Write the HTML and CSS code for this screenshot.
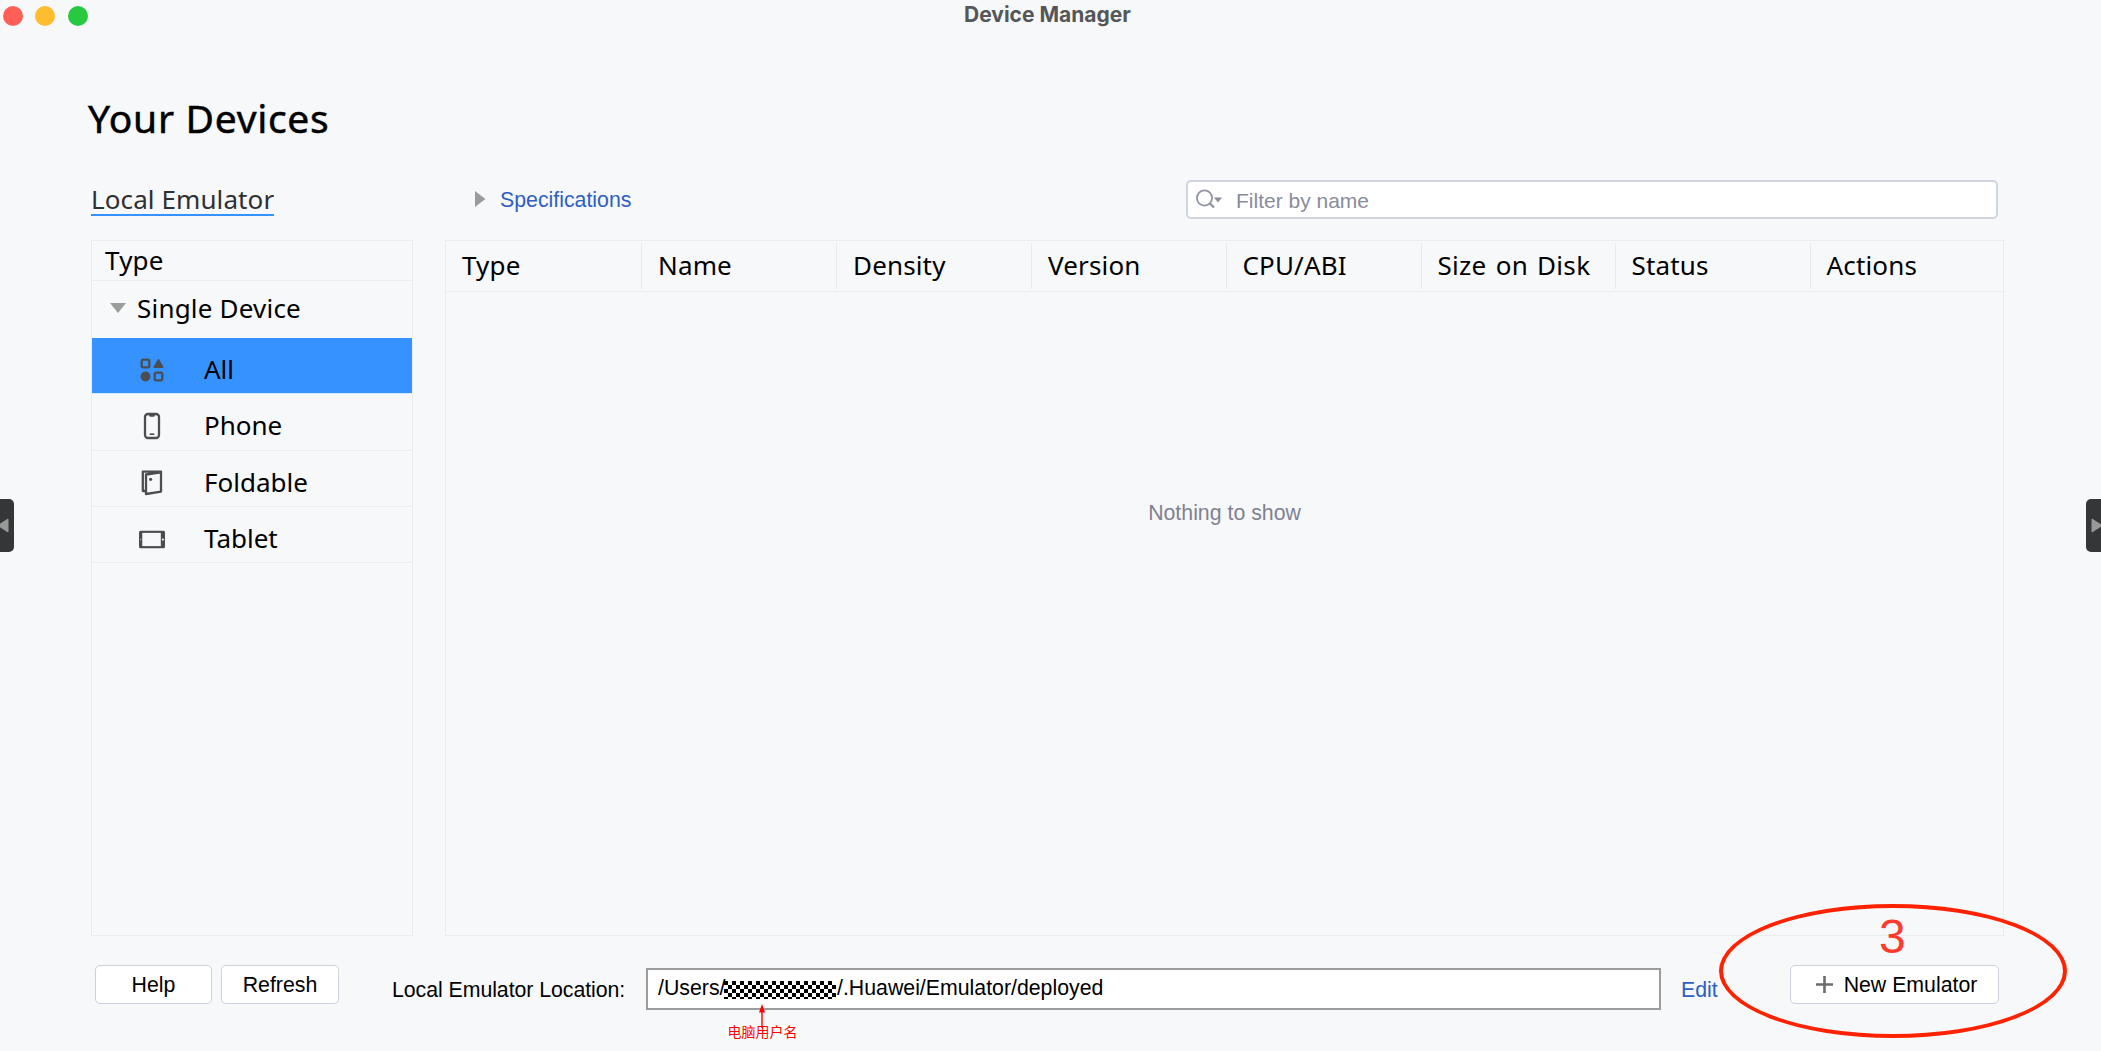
FILE: index.html
```html
<!DOCTYPE html>
<html lang="en">
<head>
    <meta charset="UTF-8">
    <meta name="viewport" content="width=device-width, initial-scale=1.0">
    <title>Device Manager</title>
    <link rel="stylesheet" href="styles.css">
</head>
<body>
    <header class="titlebar">
        <div class="lights">
            <span class="light red"></span>
            <span class="light yellow"></span>
            <span class="light green"></span>
        </div>
        <div class="window-title">Device Manager</div>
    </header>

    <main>
        <h1>Your Devices</h1>

        <div class="toolbar">
            <div class="tab-box"><a class="tab">Local Emulator</a></div>
            <div class="specs">
                <svg width="11" height="16" viewBox="0 0 11 16"><path d="M0 0L10.5 8L0 16z" fill="#9b9c9c"/></svg>
                <a class="link">Specifications</a>
            </div>
            <div class="search">
                <svg width="26" height="22" viewBox="0 0 26 22" fill="none">
                    <circle cx="8.5" cy="9" r="7.6" stroke="#9094a3" stroke-width="1.8"/>
                    <path d="M13.5 14L18 18.5" stroke="#9094a3" stroke-width="2.4"/>
                    <path d="M18 8.5h8l-4 5z" fill="#888c9b"/>
                </svg>
                <span>Filter by name</span>
            </div>
        </div>

        <div class="panels">
            <aside class="sidebar">
                <div class="side-head">Type</div>
                <div class="group">
                    <svg width="16" height="10" viewBox="0 0 16 10"><path d="M0 0h16L8 10z" fill="#9b9c9c"/></svg>
                    <span>Single Device</span>
                </div>
                <ul class="types">
                    <li class="active">
                        <svg class="icon" width="28" height="28" viewBox="0 0 28 28">
                            <g fill="none" stroke="#4c4d4f" stroke-width="2.3">
                                <rect x="3.7" y="3.7" width="7.6" height="7.6" rx="1.5"/>
                                <rect x="16.7" y="16.7" width="7.6" height="7.6" rx="1.5"/>
                            </g>
                            <circle cx="7.5" cy="20.5" r="4.9" fill="#4c4d4f"/>
                            <path d="M20.5 3.8L24.7 11.2H16.3z" fill="#4c4d4f" stroke="#4c4d4f" stroke-width="1.6" stroke-linejoin="round"/>
                        </svg>
                        <span>All</span>
                    </li>
                    <li>
                        <svg class="icon" width="28" height="28" viewBox="0 0 28 28" fill="none" stroke="#4c4d4f" stroke-width="2.3">
                            <rect x="7" y="2" width="14" height="24" rx="3"/>
                            <path d="M10.8 3h6.4l-1 1.8h-4.4z" fill="#4c4d4f" stroke="none"/>
                            <path d="M11.7 22.2h4.6" stroke-width="1.6"/>
                        </svg>
                        <span>Phone</span>
                    </li>
                    <li>
                        <svg class="icon" width="28" height="28" viewBox="0 0 28 28" fill="none" stroke="#4c4d4f" stroke-width="2.3" stroke-linejoin="round">
                            <path d="M8 23H4.8V3.6H23v20L8 26V6.5L23 4.4"/>
                            <circle cx="12.6" cy="11.3" r="1.6" fill="#4c4d4f" stroke="none"/>
                        </svg>
                        <span>Foldable</span>
                    </li>
                    <li>
                        <svg class="icon" width="28" height="28" viewBox="0 0 28 28">
                            <rect x="1" y="5.7" width="26" height="17.6" rx="1.5" fill="#4c4d4f"/>
                            <rect x="4.3" y="7.9" width="18.5" height="13.2" fill="#f7f8fa"/>
                            <circle cx="24.9" cy="14.5" r="1.1" fill="#f7f8fa"/>
                            <circle cx="2.6" cy="14.5" r=".8" fill="#a9aaab"/>
                        </svg>
                        <span>Tablet</span>
                    </li>
                </ul>
            </aside>

            <section class="devices">
                <div class="columns">
                    <div>Type</div>
                    <div>Name</div>
                    <div>Density</div>
                    <div>Version</div>
                    <div>CPU/ABI</div>
                    <div class="size">Size on Disk</div>
                    <div>Status</div>
                    <div>Actions</div>
                </div>
                <p class="empty">Nothing to show</p>
            </section>
        </div>

        <footer>
            <button class="btn help">Help</button>
            <button class="btn refresh">Refresh</button>
            <label class="location-label">Local Emulator Location:</label>
            <div class="location">
                <span class="path-start">/Users/</span>
                <svg class="mosaic" width="112" height="18">
                    <defs>
                        <pattern id="checks" width="8" height="8" patternUnits="userSpaceOnUse">
                            <rect width="8" height="8" fill="#fff"/>
                            <rect width="4" height="4" fill="#000"/>
                            <rect x="4" y="4" width="4" height="4" fill="#000"/>
                        </pattern>
                    </defs>
                    <rect width="112" height="18" fill="url(#checks)"/>
                </svg>
                <span class="path-end">/.Huawei/Emulator/deployed</span>
            </div>
            <a class="link edit">Edit</a>
            <button class="btn new">
                <svg width="17" height="17" viewBox="0 0 17 17"><path d="M8.5 0v17M0 8.5h17" stroke="#6b6c6e" stroke-width="2.6"/></svg>
                <span>New Emulator</span>
            </button>
        </footer>
    </main>

    <!-- Pager handles on the window edges -->
    <div class="handle left">
        <svg width="10" height="15" viewBox="0 0 10 15"><path d="M9 1v13L-1 7.5z" fill="#999" stroke="#999" stroke-linejoin="round"/></svg>
    </div>
    <div class="handle right">
        <svg width="10" height="15" viewBox="0 0 10 15"><path d="M1 1v13L11 7.5z" fill="#999" stroke="#999" stroke-linejoin="round"/></svg>
    </div>

    <!-- Red annotations -->
    <div class="ring"></div>
    <div class="step">3</div>
    <div class="note" lang="zh">电脑用户名</div>
    <svg class="arrow" width="8" height="24" viewBox="0 0 8 24"><path d="M4 24V6" stroke="#f00" stroke-width="1.4"/><path d="M4 0l3 8.5H1z" fill="#f00"/></svg>
</body>
</html>
```
FILE: styles.css
```css
/* Basic Reset & Body Styling */
* {
    margin: 0;
    padding: 0;
    box-sizing: border-box;
}

body {
    position: relative;
    width: 2101px;
    height: 1051px;
    overflow: hidden;
    background-color: #f7f8fa;
    color: #000;
    font-family: "Noto Sans", "Open Sans", sans-serif;
    font-size: 26px;
}

svg {
    display: block;
    flex: none;
}

/* Title bar */
.titlebar {
    display: flex;
    height: 31px;
    padding-left: 3px;
    align-items: center;
}

.lights {
    display: flex;
    gap: 12.3px;
    width: 961px;
}

.light {
    width: 20px;
    height: 20px;
    border-radius: 50%;
}

.red {
    background-color: #ff5f57;
}

.yellow {
    background-color: #febc2e;
}

.green {
    background-color: #28c840;
}

.window-title {
    font: bold 21px/29px Inter, sans-serif;
    color: #555657;
    padding-bottom: 2px;
}

main {
    padding: 62px 97px 0 88px;
}

h1 {
    font-size: 39px;
    font-weight: 400;
    line-height: 50px;
    letter-spacing: 0.7px;
    -webkit-text-stroke: 0.5px #000;
}

/* Tab, specifications and filter */
.toolbar {
    display: flex;
    align-items: center;
    height: 38px;
    margin-top: 37px;
    padding-left: 3px;
}

.tab-box {
    width: 384px;
}

.tab {
    display: inline-block;
    height: 33px;
    line-height: 32px;
    letter-spacing: 0.1px;
    color: #2f3032;
    border-bottom: 2px solid #3592ff;
}

.specs {
    display: flex;
    align-items: center;
    gap: 14px;
    width: 711px;
}

.specs .link {
    padding-top: 2px;
}

.link,
.search,
.empty,
.btn,
.location,
.location-label {
    font-family: "Liberation Sans", Arial, sans-serif;
    font-size: 21.3px;
}

.link {
    color: #2e5fc2;
}

.search {
    display: flex;
    align-items: center;
    gap: 14px;
    width: 812px;
    height: 39px;
    padding: 4px 0 0 8px;
    background-color: #fff;
    border: 2px solid #d0d4de;
    border-radius: 5px;
    color: #888b9d;
    font-size: 21px;
}

.search svg {
    margin-top: -2px;
}

/* Sidebar and device table */
.panels {
    display: flex;
    gap: 32px;
    height: 696px;
    margin: 22px 0 0 3px;
}

.sidebar {
    width: 322px;
    border: 1.5px solid #ebecee;
}

.side-head {
    height: 40px;
    padding-left: 13px;
    line-height: 38px;
    letter-spacing: 0.2px;
    border-bottom: 1.5px solid #ebecee;
}

.group {
    display: flex;
    align-items: center;
    gap: 11px;
    height: 57px;
    padding: 0 0 3px 18px;
    letter-spacing: 0.2px;
}

.types {
    list-style: none;
}

.types li {
    display: flex;
    align-items: center;
    gap: 38px;
    height: 56.3px;
    padding: 8px 0 0 46px;
    border-bottom: 1.5px solid #ebecee;
}

.types .active {
    background-color: #3592ff;
    border-bottom-color: #d6e6fb;
}

.types span {
    padding-bottom: 1px;
}

.devices {
    width: 1559px;
    border: 1.5px solid #ebecee;
}

.columns {
    display: grid;
    grid-template-columns: 196px 195px 195px 194.5px 195px 194px 195px 1fr;
    height: 51px;
    padding: 2px 0;
    letter-spacing: 0.15px;
    border-bottom: 1.5px solid #ebecee;
}

.columns div {
    padding-left: 16px;
    line-height: 45px;
    border-right: 1px solid #e8e9eb;
    white-space: nowrap;
}

.columns .size {
    letter-spacing: 0.3px;
    word-spacing: 2px;
}

.columns div:last-child {
    border-right: none;
}

.empty {
    margin-top: 208px;
    text-align: center;
    line-height: 26px;
    color: #7f8291;
}

/* Footer */
footer {
    display: flex;
    height: 45px;
    margin-top: 29px;
    padding-left: 7px;
}

.btn {
    display: flex;
    justify-content: center;
    align-items: center;
    height: 39px;
    padding-top: 2px;
    background-color: #fff;
    border: 1.5px solid #cdd1dc;
    border-radius: 5px;
}

.help {
    width: 117px;
}

.refresh {
    width: 118px;
    margin-left: 9px;
}

.location-label {
    width: 254px;
    margin-left: 53px;
    line-height: 50px;
    letter-spacing: -0.05px;
}

.location {
    display: flex;
    align-items: center;
    width: 1015px;
    height: 42px;
    margin-top: 3px;
    padding: 0 0 1px 10px;
    background-color: #fff;
    border: 2px solid #9b9c9d;
}

.path-start {
    width: 66px;
}

.mosaic {
    margin: 2px 1px 0 0;
}

.edit {
    width: 109px;
    margin-left: 20px;
    line-height: 50px;
}

.new {
    width: 209px;
    gap: 11px;
    padding-left: 4px;
}

.new svg {
    margin-top: -2px;
}

/* Edge handles */
.handle {
    position: absolute;
    top: 499px;
    display: flex;
    align-items: center;
    width: 14px;
    height: 53px;
    background-color: #353637;
    overflow: hidden;
}

.left {
    left: 0;
    border-radius: 0 5px 5px 0;
}

.left svg {
    margin-left: -1px;
}

.right {
    right: 0;
    width: 15px;
    padding-left: 5px;
    border-radius: 5px 0 0 5px;
}

/* Annotations */
.ring {
    position: absolute;
    left: 1719px;
    top: 904px;
    width: 348px;
    height: 134px;
    border: 4px solid #ff2200;
    border-radius: 50%;
}

.step {
    position: absolute;
    left: 1879px;
    top: 909px;
    font: 48px/55px "Liberation Sans", Arial, sans-serif;
    color: #ff3b30;
}

.note {
    position: absolute;
    left: 726px;
    top: 1025px;
    width: 73px;
    height: 14px;
    background-color: #fff;
    font: 14px/14px "Liberation Sans", "Noto Sans CJK SC", sans-serif;
    color: #f00;
    text-align: center;
}

.arrow {
    position: absolute;
    left: 758px;
    top: 1004px;
}
```
